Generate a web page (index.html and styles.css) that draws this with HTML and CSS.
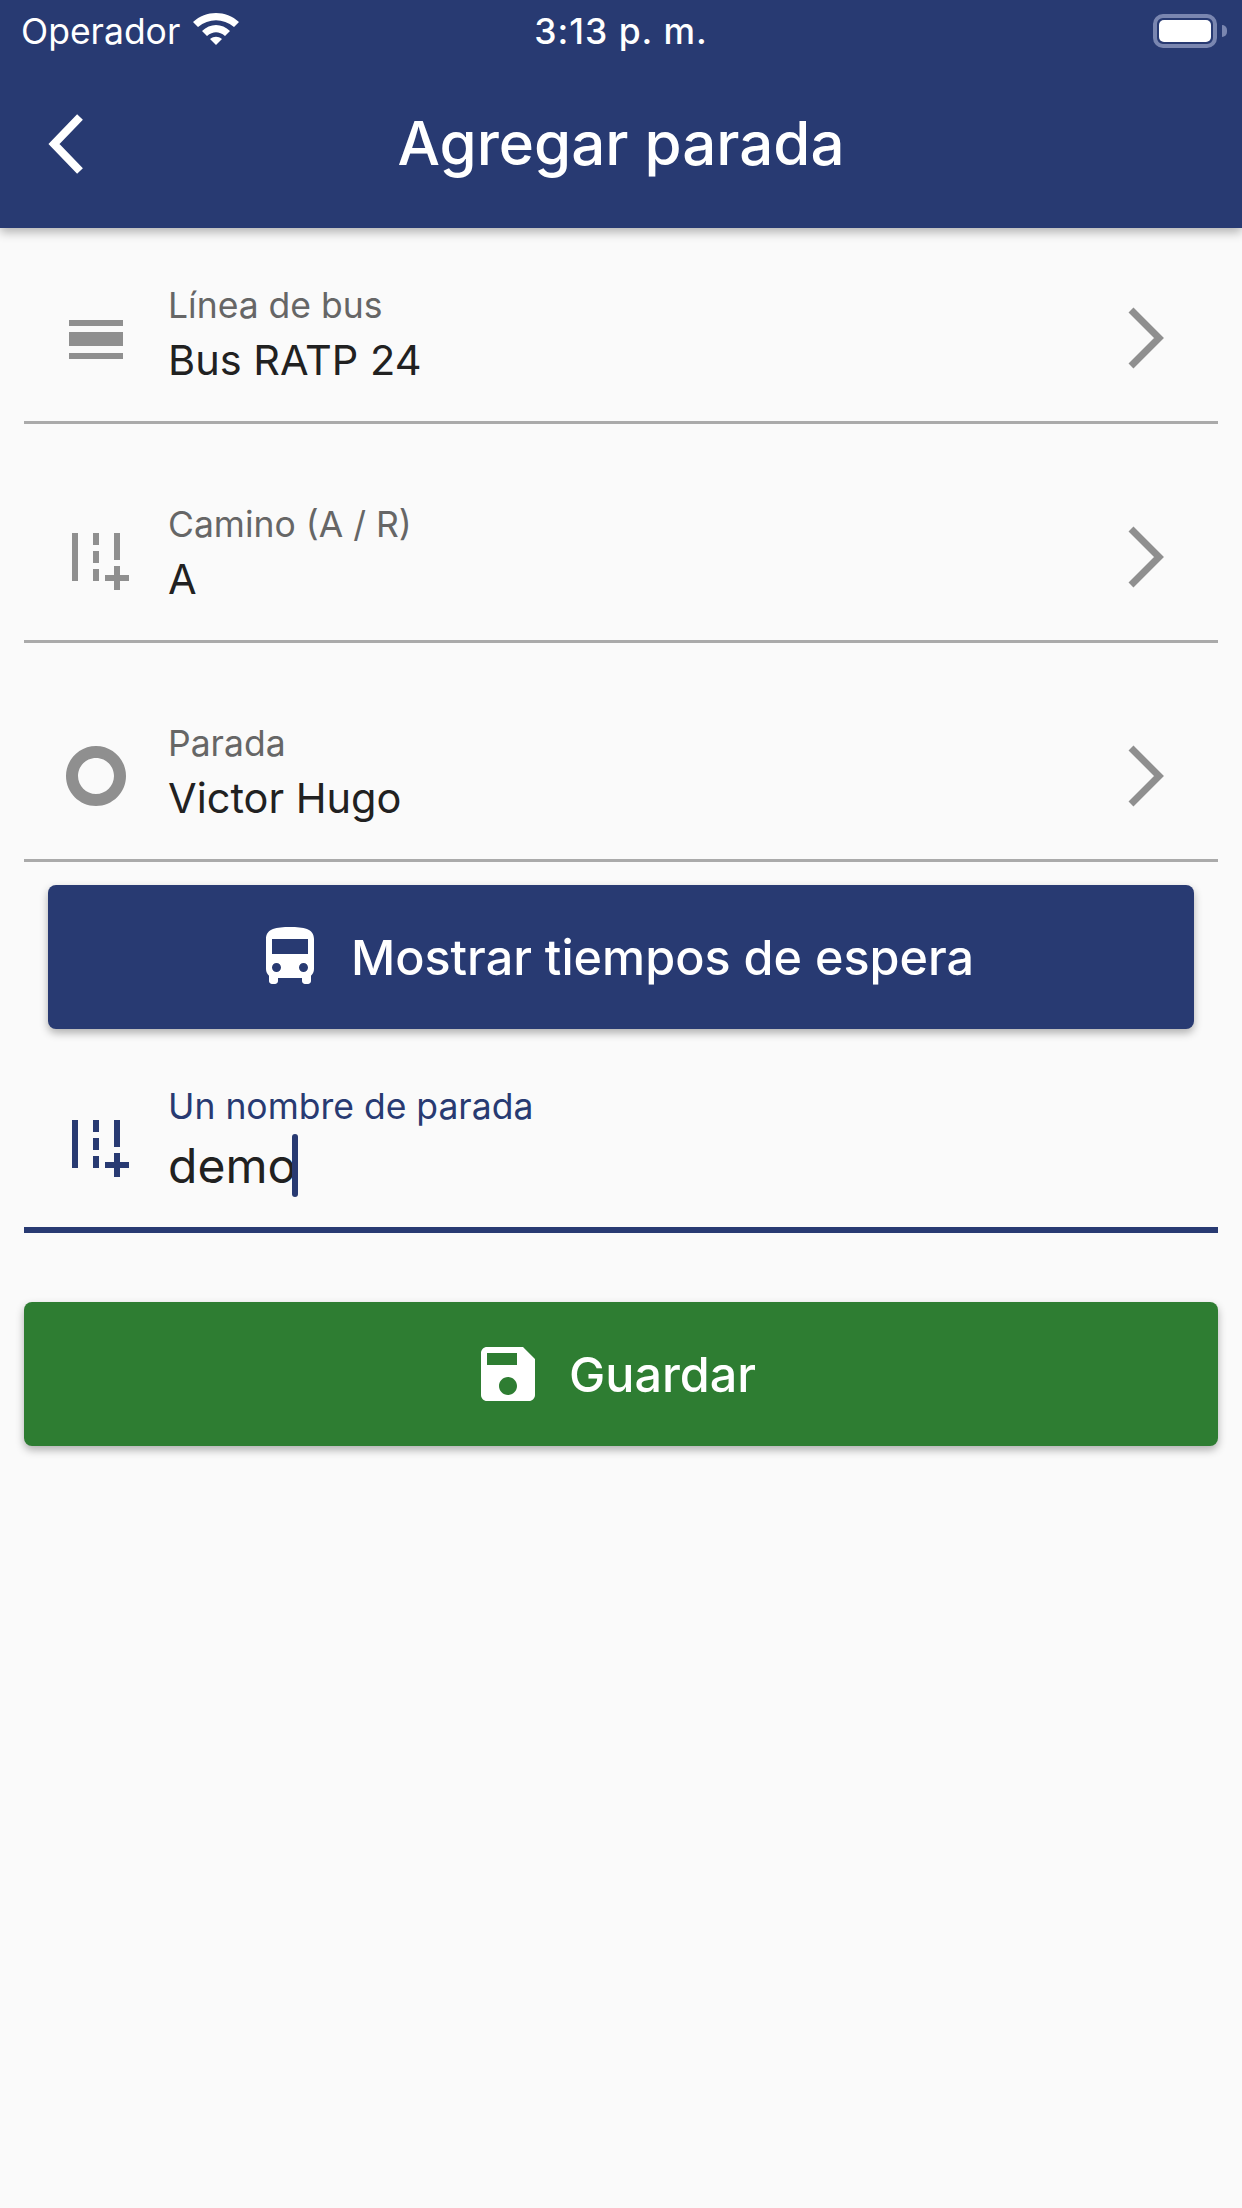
FILE: index.html
```html
<!DOCTYPE html>
<html lang="es">
<head>
<meta charset="utf-8">
<title>Agregar parada</title>
<link rel="stylesheet" href="styles.css">
</head>
<body>
<header class="appbar">
  <div class="status">
    <div class="status-left">
      <span>Operador</span>
      <svg class="wifi" viewBox="0 0 46 32"><path d="M0 9C13-3 33-3 46 9L41 14C30 5 16 5 5 14Z"/><path d="M9 18C17 10 29 10 37 18L32 23C26 18 20 18 14 23Z"/><path d="M17 26C21 23 25 23 29 26L23 32Z"/></svg>
    </div>
    <span class="clock">3:13 p. m.</span>
    <div class="battery"><div class="battery-fill"></div></div>
  </div>
  <div class="toolbar">
    <svg class="back" viewBox="0 0 40 60"><path d="M34 3 8 30 34 57"/></svg>
    <h1 class="title">Agregar parada</h1>
  </div>
</header>
<main class="content">
  <div class="row row-first">
    <svg class="icon" viewBox="0 0 72 72"><rect x="9" y="18" width="54" height="6"/><rect x="9" y="30" width="54" height="14"/><rect x="9" y="51" width="54" height="6"/></svg>
    <div class="field"><span class="label">Línea de bus</span><span class="value">Bus RATP 24</span></div>
    <svg class="chevron" viewBox="0 0 40 64"><path d="M4 4 32 32 4 60"/></svg>
  </div>
  <div class="row">
    <svg class="icon" viewBox="0 0 24 24"><path d="M18 4h2v9h-2zM4 4h2v16H4zM11 4h2v4h-2zM11 10h2v4h-2zM11 16h2v4h-2zM20 15h-2v3h-3v2h3v3h2v-3h3v-2h-3z"/></svg>
    <div class="field"><span class="label">Camino (A / R)</span><span class="value">A</span></div>
    <svg class="chevron" viewBox="0 0 40 64"><path d="M4 4 32 32 4 60"/></svg>
  </div>
  <div class="row">
    <svg class="icon" viewBox="0 0 24 24"><path d="M12 2C6.48 2 2 6.48 2 12s4.48 10 10 10 10-4.48 10-10S17.52 2 12 2zm0 16c-3.31 0-6-2.69-6-6s2.69-6 6-6 6 2.69 6 6-2.69 6-6 6z"/></svg>
    <div class="field"><span class="label">Parada</span><span class="value">Victor Hugo</span></div>
    <svg class="chevron" viewBox="0 0 40 64"><path d="M4 4 32 32 4 60"/></svg>
  </div>
  <button class="btn btn-blue" type="button">
    <svg class="btn-icon" viewBox="0 0 24 24"><path d="M4 16c0 .88.39 1.67 1 2.22V20c0 .55.45 1 1 1h1c.55 0 1-.45 1-1v-1h8v1c0 .55.45 1 1 1h1c.55 0 1-.45 1-1v-1.78c.61-.55 1-1.34 1-2.22V6c0-3.5-3.58-4-8-4s-8 .5-8 4v10zm3.500 1c-.83 0-1.500-.67-1.500-1.500S6.670 14 7.500 14s1.500.67 1.500 1.500S8.330 17 7.500 17zm9 0c-.83 0-1.500-.67-1.500-1.500s.67-1.500 1.500-1.500 1.500.67 1.500 1.500-.67 1.500-1.500 1.500zm1.500-6H6V6h12v5z"/></svg>
    <span>Mostrar tiempos de espera</span>
  </button>
  <div class="row row-input">
    <svg class="icon" viewBox="0 0 24 24"><path d="M18 4h2v9h-2zM4 4h2v16H4zM11 4h2v4h-2zM11 10h2v4h-2zM11 16h2v4h-2zM20 15h-2v3h-3v2h3v3h2v-3h3v-2h-3z"/></svg>
    <div class="field"><span class="label">Un nombre de parada</span><span class="value value-input">demo<i class="caret"></i></span></div>
  </div>
  <button class="btn btn-green" type="button">
    <svg class="btn-icon" viewBox="0 0 24 24"><path d="M17 3H5c-1.110 0-2 .9-2 2v14c0 1.100.89 2 2 2h14c1.100 0 2-.9 2-2V7l-4-4zm-5 16c-1.660 0-3-1.340-3-3s1.340-3 3-3 3 1.340 3 3-1.340 3-3 3zm3-10H5V5h10v4z"/></svg>
    <span>Guardar</span>
  </button>
</main>
</body>
</html>
```
FILE: styles.css
```css
* { box-sizing: border-box; }
html, body { margin: 0; height: 2208px; }
body {
  background: #fafafa;
  font-family: Inter, "Noto Sans", sans-serif;
  overflow: hidden;
}
.appbar {
  height: 228px;
  background: #283a72;
  color: #fff;
  box-shadow: 0 4px 10px rgba(0, 0, 0, .3);
}
.status {
  height: 60px;
  display: grid;
  grid-template-columns: 1fr auto 1fr;
  align-items: center;
  padding: 2px 21px 0 21px;
  font-size: 35.500px;
}
.status-left { display: flex; align-items: center; gap: 13px; }
.wifi { width: 46px; height: 32px; fill: #fff; margin-top: -5px; }
.clock { font-weight: 500; letter-spacing: 1px; }
.battery {
  justify-self: end;
  position: relative;
  width: 64px;
  height: 34px;
  border: 4px solid #7a86b0;
  border-radius: 10px;
  padding: 2px;
  margin-right: 4px;
  background: #283a72;
}
.battery::after {
  content: "";
  position: absolute;
  right: -14px;
  top: 7px;
  width: 5px;
  height: 12px;
  background: #7a86b0;
  border-radius: 0 6px 6px 0;
}
.battery-fill { height: 100%; background: #fff; border-radius: 5px; }
.toolbar {
  position: relative;
  height: 168px;
  display: flex;
  align-items: center;
  justify-content: center;
}
.back {
  position: absolute;
  left: 46px;
  top: 54px;
  width: 40px;
  height: 60px;
  fill: none;
  stroke: #fff;
  stroke-width: 8;
}
.title { margin: -2px 0 0; font-size: 60px; font-weight: 500; line-height: 72px; }
.content { padding: 0 24px; }
.row {
  display: flex;
  align-items: flex-end;
  height: 219px;
  padding: 0 51px 47px 36px;
  border-bottom: 3px solid #aaa;
  color: #8f8f8f;
}
.row-first { height: 196px; }
.icon { width: 72px; height: 72px; fill: currentColor; flex: none; }
.field {
  flex: 1;
  display: flex;
  flex-direction: column;
  margin: 0 0 -14px 36px;
}
.label { font-size: 35.500px; line-height: 53px; color: #666; }
.value { font-size: 41.500px; line-height: 56px; color: #212121; }
.chevron {
  width: 40px;
  height: 64px;
  margin: 0 0 4px 0;
  fill: none;
  stroke: #8f8f8f;
  stroke-width: 7;
}
.btn {
  display: flex;
  align-items: center;
  justify-content: center;
  gap: 25px;
  width: 100%;
  height: 144px;
  border: 0;
  padding: 0 14px 0 0;
  border-radius: 8px;
  color: #fff;
  font: 500 48.500px Inter, "Noto Sans", sans-serif;
  box-shadow: 0 4px 8px rgba(0, 0, 0, .3);
}
.btn-blue {
  background: #283a72;
  margin: 23px 24px 0;
  width: calc(100% - 48px);
}
.btn-green { background: #2e7d32; margin-top: 69px; }
.btn-icon { width: 72px; height: 72px; fill: #fff; flex: none; }
.row-input {
  height: 204px;
  border-bottom: 6px solid #283a72;
  color: #283a72;
  padding-bottom: 47px;
}
.row-input .field { margin-bottom: -19px; }
.row-input .label { color: #283a72; }
.value-input { position: relative; font-size: 48px; line-height: 66px; }
.caret {
  position: absolute;
  left: 124px;
  top: 1px;
  width: 6px;
  height: 63px;
  background: #283a72;
  border-radius: 3px;
}
```
